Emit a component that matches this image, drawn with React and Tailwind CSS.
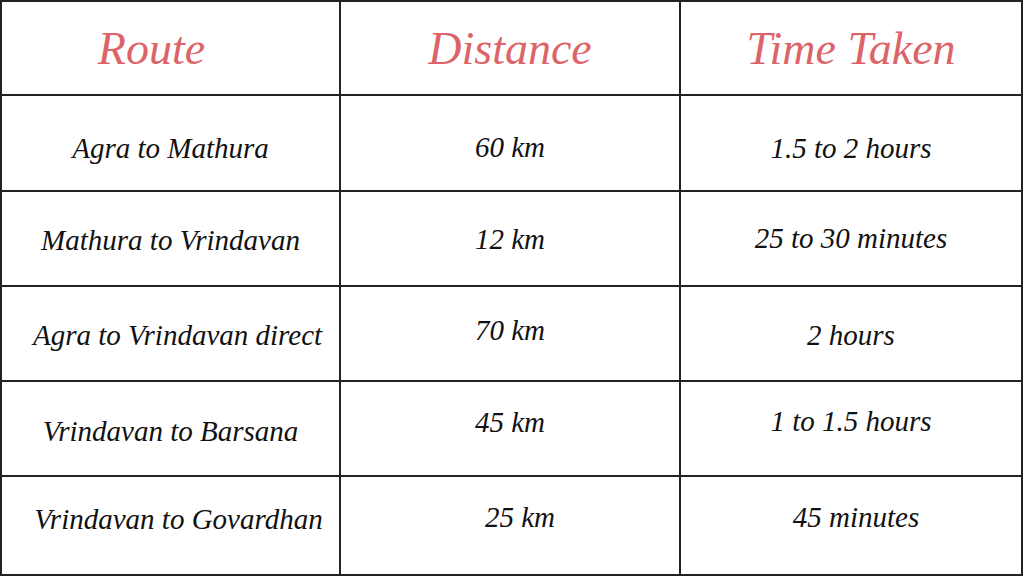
const HEADERS = [
  { label: 'Route', cls: 'pr-[38px] border-r-2' },
  { label: 'Distance', cls: 'border-r-2' },
  { label: 'Time Taken', cls: '' },
]

// each cell carries a small padding nudge so the text sits where it does in the source
const ROWS = [
  [
    ['Agra to Mathura', 'pt-[12px]'],
    ['60 km', 'pt-[10px]'],
    ['1.5 to 2 hours', 'pt-[12px]'],
  ],
  [
    ['Mathura to Vrindavan', 'pt-[4px]'],
    ['12 km', 'pt-[2px]'],
    ['25 to 30 minutes', ''],
  ],
  [
    ['Agra to Vrindavan direct', 'pl-[14px] pt-[4px]'],
    ['70 km', 'pb-[6px]'],
    ['2 hours', 'pt-[4px]'],
  ],
  [
    ['Vrindavan to Barsana', 'pt-[6px]'],
    ['45 km', 'pb-[12px]'],
    ['1 to 1.5 hours', 'pb-[14px]'],
  ],
  [
    ['Vrindavan to Govardhan', 'pl-[16px] pb-[12px]'],
    ['25 km', 'pl-[20px] pb-[16px]'],
    ['45 minutes', 'pl-[10px] pb-[16px]'],
  ],
]

export default function App() {
  return (
    <div
      className="w-[1024px] h-[576px] bg-white"
      style={{ fontFamily: '"Liberation Serif", serif' }}
    >
      <div className="w-[1023px] h-[576px] border-2 border-[#222] grid grid-cols-[339px_340px_340px] grid-rows-[94px_96px_95px_95px_95px_97px] italic">
        {HEADERS.map(h => (
          <div
            key={h.label}
            className={`flex items-center justify-center border-b-2 border-[#222] text-[46px] text-[#dc6469] ${h.cls}`}
          >
            {h.label}
          </div>
        ))}
        {ROWS.map((row, r) =>
          row.map(([text, nudge], c) => (
            <div
              key={r + '-' + c}
              className={`flex items-center justify-center text-[29px] text-[#111] border-[#222] ${c < 2 ? 'border-r-2' : ''} ${r < ROWS.length - 1 ? 'border-b-2' : ''} ${nudge}`}
            >
              {text}
            </div>
          ))
        )}
      </div>
    </div>
  )
}
